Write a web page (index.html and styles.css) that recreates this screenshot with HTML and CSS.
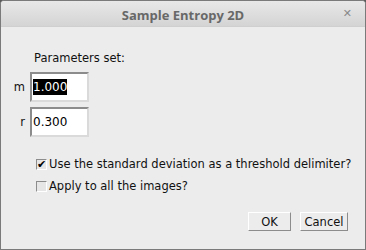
FILE: index.html
```html
<!doctype html>
<html>
  <head>
    <title>Sample Entropy 2D</title>
    <link rel="stylesheet" href="styles.css">
  </head>
  <body>
    <div class="window">
      <div class="titlebar">
        <span class="title">Sample Entropy 2D</span>
        <span class="close">&#x2715;</span>
      </div>
      <div class="content">
        <div class="heading">Parameters set:</div>
        <div class="row">
          <span class="label">m</span>
          <div class="field"><span class="selected">1.000</span></div>
        </div>
        <div class="row">
          <span class="label">r</span>
          <div class="field">0.300</div>
        </div>
        <div class="checks">
          <div class="check"><span class="box on">&#x2714;</span>Use the standard deviation as a threshold delimiter?</div>
          <div class="check"><span class="box"></span>Apply to all the images?</div>
        </div>
        <div class="buttons">
          <div class="button ok">OK</div>
          <div class="button cancel">Cancel</div>
        </div>
      </div>
    </div>
  </body>
</html>
```

FILE: styles.css
```css
body {
  margin: 0;
  background: #5a5a5a;
  font-family: "DejaVu Sans", sans-serif;
  font-size: 11.5px;
  color: #111;
}
.window {
  width: 364px;
  height: 248px;
  border: 1px solid #7a7a7a;
  border-radius: 4px 4px 0 0;
  background: #ececec;
  display: flex;
  flex-direction: column;
  overflow: hidden;
}
.titlebar {
  height: 25px;
  background: linear-gradient(#e8e8e8, #d4d4d4);
  border-bottom: 1px solid #cfcfcf;
  position: relative;
  display: flex;
  align-items: center;
  justify-content: center;
}
.title {
  font-family: "Open Sans", "DejaVu Sans", sans-serif;
  font-weight: bold;
  font-size: 13px;
  color: #686868;
  margin-top: 2px;
}
.close {
  position: absolute;
  right: 13px;
  top: 6px;
  font-size: 11px;
  font-weight: bold;
  color: #8a8a8a;
}
.content {
  flex: 1;
  padding-top: 23px;
}
.heading {
  margin-left: 33px;
  height: 16px;
  line-height: 16px;
}
.row {
  display: flex;
  align-items: center;
  margin-top: 6px;
}
.row + .row {
  margin-top: 5px;
}
.label {
  width: 29px;
  text-align: right;
  padding-right: 5px;
  box-sizing: border-box;
}
.field {
  width: 59px;
  height: 30px;
  box-sizing: border-box;
  background: #fff;
  border: 2px solid;
  border-color: #8c8c8c #dadada #dadada #8c8c8c;
  display: flex;
  align-items: center;
  padding-left: 1px;
  font-size: 12px;
  color: #000;
}
.selected {
  background: #000;
  color: #fff;
  padding: 1px 0;
}
.checks {
  margin-top: 19px;
  margin-left: 35px;
}
.check {
  display: flex;
  align-items: center;
  height: 16px;
  margin-bottom: 6px;
}
.box {
  width: 9px;
  height: 9px;
  border: 1px solid;
  border-color: #8c8c8c #fff #fff #8c8c8c;
  background: #e6e6e6;
  margin-right: 2px;
  font-size: 11px;
  line-height: 9px;
  text-align: center;
  color: #000;
  overflow: hidden;
}
.buttons {
  display: flex;
  justify-content: flex-end;
  gap: 9px;
  margin-top: 18px;
  margin-right: 17px;
}
.button {
  height: 19px;
  box-sizing: border-box;
  border: 1px solid;
  border-color: #fff #8c8c8c #8c8c8c #fff;
  display: flex;
  align-items: center;
  justify-content: center;
}
.ok {
  width: 43px;
}
.cancel {
  width: 48px;
}
```
